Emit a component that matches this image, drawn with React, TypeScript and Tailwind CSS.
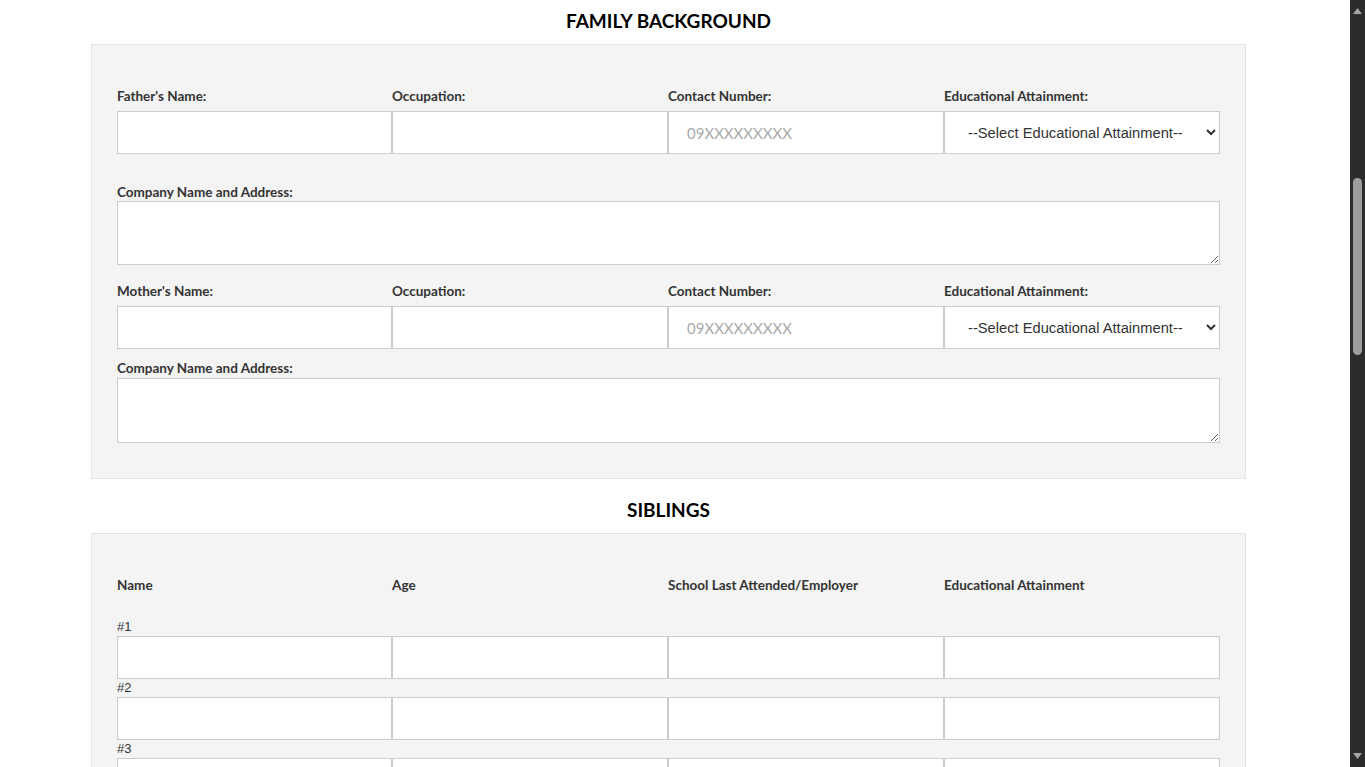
import React from "react";

const labelFont = "font-['Lato','Open_Sans',sans-serif]";
const cols = "grid grid-cols-[275px_276px_276px_276px]";

const Label = ({ text }: { text: string }) => (
  <label className={`block text-[13.5px] leading-[18px] font-bold text-[#333] ${labelFont}`}>
    {text}
  </label>
);

const inputCls =
  "block w-full h-[43px] bg-white border border-[#ccc] px-[18px] text-[15px] text-[#555] outline-none placeholder:text-[#aaa] font-['Lato',sans-serif]";

const SectionTitle = ({ text, first }: { text: string; first?: boolean }) => (
  <h2
    className={`text-center text-[19px] leading-[24px] font-bold text-black ${labelFont} ${
      first ? "pt-[9px]" : "pt-[19px]"
    } pb-[11px]`}
  >
    {text}
  </h2>
);

const ParentBlock = ({ who, top }: { who: string; top: boolean }) => (
  <>
    <div className={`${cols} ${top ? "" : "mt-[17px]"}`}>
      {[`${who}'s Name:`, "Occupation:", "Contact Number:", "Educational Attainment:"].map((l) => (
        <div key={l} className="mb-[6px]">
          <Label text={l} />
        </div>
      ))}
      <input className={inputCls} />
      <input className={inputCls} />
      <input className={inputCls} placeholder="09XXXXXXXXX" />
      <select className="block w-full h-[43px] bg-white border border-[#ccc] pl-[19px] pr-[4px] text-[14.7px] text-[#333] font-['Liberation_Sans',Arial,sans-serif]">
        <option>--Select Educational Attainment--</option>
        <option>Elementary</option>
        <option>High School</option>
        <option>College</option>
      </select>
    </div>
    <div className={top ? "mt-[29px]" : "mt-[10px]"}>
      <Label text="Company Name and Address:" />
      <textarea
        className={`block w-[1103px] bg-white border border-[#ccc] px-[18px] py-2 text-[14px] outline-none ${
          top ? "h-[64px]" : "h-[65px] mt-[1px]"
        }`}
      />
    </div>
  </>
);

// browser scrollbar as seen in the screenshot
const ScrollBar = () => (
  <div className="w-[15px] h-screen shrink-0 bg-[#2c2c2c] flex flex-col items-center">
    <svg width="9" height="6" viewBox="0 0 9 6" className="mt-[8px]">
      <polygon points="4.5,0 9,6 0,6" fill="#a3a3a3" />
    </svg>
    <div className="mt-[164px] w-[9px] h-[177px] rounded-full bg-[#9e9e9e]" />
    <div className="flex-1" />
    <svg width="9" height="6" viewBox="0 0 9 6" className="mb-[8px]">
      <polygon points="0,0 9,0 4.5,6" fill="#a3a3a3" />
    </svg>
  </div>
);

export default function App() {
  const siblings = [1, 2, 3, 4, 5];
  return (
    <div className="flex h-screen bg-white">
      <main className="flex-1 h-screen overflow-hidden">
        <div className="ml-[91px] w-[1155px]">
          <SectionTitle text="FAMILY BACKGROUND" first />
          <div className="bg-[#f4f4f4] border border-[#e3e3e3] pt-[42px] pb-[35px] px-[25px]">
            <ParentBlock who="Father" top />
            <ParentBlock who="Mother" top={false} />
          </div>

          <SectionTitle text="SIBLINGS" />
          <div className="bg-[#f4f4f4] border border-[#e3e3e3] pt-[42px] pb-[35px] px-[25px]">
            <div className={`${cols} mb-[24px]`}>
              {["Name", "Age", "School Last Attended/Employer", "Educational Attainment"].map((h) => (
                <Label key={h} text={h} />
              ))}
            </div>
            {siblings.map((n) => (
              <div key={n}>
                <div className="text-[13px] leading-[18px] text-[#333] font-['Liberation_Sans',Arial,sans-serif]">
                  #{n}
                </div>
                <div className={cols}>
                  <input className={inputCls} />
                  <input className={inputCls} />
                  <input className={inputCls} />
                  <input className={inputCls} />
                </div>
              </div>
            ))}
          </div>
        </div>
      </main>
      <ScrollBar />
    </div>
  );
}
